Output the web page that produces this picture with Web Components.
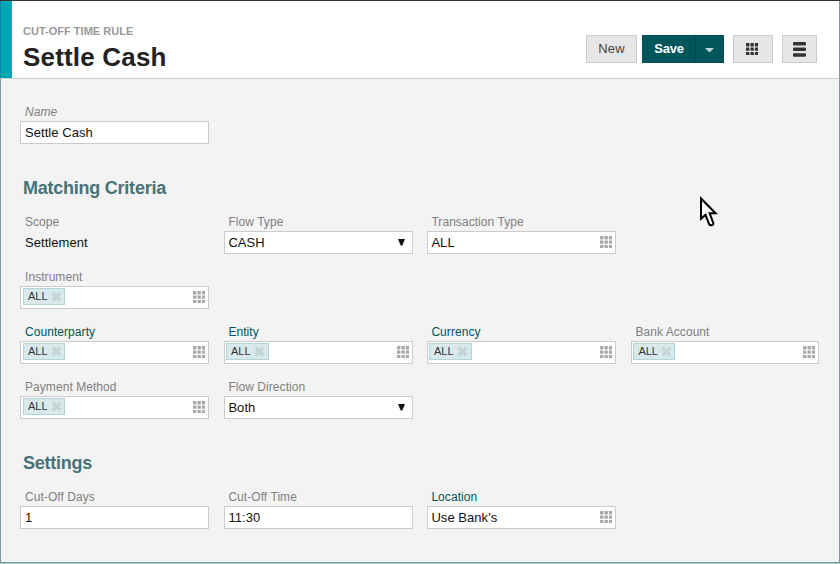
<!DOCTYPE html>
<html lang="en"><head><meta charset="utf-8"><title>Cut-Off Time Rule</title>
<style>html,body{margin:0;height:100%;overflow:hidden}body{font-family:"Liberation Sans",Arial,sans-serif;color:#222}</style></head>
<body>
<rule-page>
  <page-header slot="header" kicker="CUT-OFF TIME RULE" heading="Settle Cash">
    <tool-button style="width:51px;margin-right:5px">New</tool-button>
    <save-button>Save</save-button>
    <tool-button style="width:40px;margin:0 9px;padding-right:2px"><icon-grid dark></icon-grid></tool-button>
    <tool-button style="width:35px"><icon-list></icon-list></tool-button>
  </page-header>
  <field-row><form-field label="Name" italic>Settle Cash</form-field></field-row>
  <section-title style="margin-top:33px">Matching Criteria</section-title>
  <field-row style="margin-top:16px"><form-field label="Scope" kind="plain">Settlement</form-field><form-field label="Flow Type" kind="select">CASH</form-field><form-field label="Transaction Type" kind="lookup">ALL</form-field></field-row>
  <field-row style="margin-top:16px"><form-field label="Instrument" kind="lookup"><value-chip>ALL</value-chip></form-field></field-row>
  <field-row style="margin-top:16px"><form-field label="Counterparty" link kind="lookup"><value-chip>ALL</value-chip></form-field><form-field label="Entity" link kind="lookup"><value-chip wide>ALL</value-chip></form-field><form-field label="Currency" link kind="lookup"><value-chip wide>ALL</value-chip></form-field><form-field label="Bank Account" kind="lookup"><value-chip>ALL</value-chip></form-field></field-row>
  <field-row style="margin-top:16px"><form-field label="Payment Method" kind="lookup"><value-chip>ALL</value-chip></form-field><form-field label="Flow Direction" kind="select">Both</form-field></field-row>
  <section-title style="margin-top:33px">Settings</section-title>
  <field-row style="margin-top:16px"><form-field label="Cut-Off Days">1</form-field><form-field label="Cut-Off Time">11:30</form-field><form-field label="Location" link kind="lookup">Use Bank's</form-field></field-row>
</rule-page>
<mouse-pointer></mouse-pointer>
<script>
function define(name, render) {
  customElements.define(name, class extends HTMLElement {
    constructor() { super(); this.attachShadow({ mode: "open" }); }
    connectedCallback() { this.shadowRoot.innerHTML = render(this); }
  });
}
const at = (el, n) => el.getAttribute(n) || "";

define("rule-page", () => `<style>
  :host{display:flex;flex-direction:column;box-sizing:border-box;height:564px;border-top:1px solid #333;border-bottom:1px solid #a3cbcb}
  main{flex:1;box-sizing:border-box;background:#f3f3f3;border:solid #789da1;border-width:0 1px 1px;padding:26px 0 0 19px}
</style><slot name="header"></slot><main><slot></slot></main>`);

define("page-header", el => `<style>
  :host{display:flex;box-sizing:border-box;height:78px;background:#fff;border-bottom:1px solid #ccc;border-right:1px solid #789da1}
  .bar{width:12px;box-sizing:border-box;background:#00a5b8;border-left:1px solid #038c9c}
  .titles{flex:1;padding:24px 0 0 11px}
  .kicker{font:bold 11px/13px "Liberation Sans",Arial,sans-serif;color:#999;letter-spacing:.02px}
  h1{margin:4px 0 0;font-size:26px;line-height:30px;letter-spacing:.18px;color:#222}
  .actions{display:flex;padding:34px 22px 0 0;height:28px}
</style><div class="bar"></div><div class="titles"><div class="kicker">${at(el,"kicker")}</div><h1>${at(el,"heading")}</h1></div><div class="actions"><slot></slot></div>`);

define("tool-button", () => `<style>
  :host{display:flex;box-sizing:border-box;height:28px;align-items:center;justify-content:center;background:#e6e6e6;border:1px solid #ccc;font-size:13px;line-height:26px;letter-spacing:.2px;color:#444}
</style><slot></slot>`);

define("save-button", () => `<style>
  :host{display:flex;box-sizing:border-box;width:82px;height:28px;background:#00565b;border:1px solid #004f54;color:#fff;font-weight:bold;font-size:13px;line-height:26px;letter-spacing:-.2px}
  span{width:52px;text-align:center;border-right:1px solid #00484d}
  i{flex:1;display:flex;align-items:center;justify-content:center}
</style><span><slot></slot></span><i><svg width="9" height="4" style="margin:2px 1px 0 0"><path d="M0 0h9L5 4H4z" fill="#b9d3d4"/></svg></i>`);

define("icon-grid", el => {
  const dark = el.hasAttribute("dark");
  let r = "";
  for (let y = 0; y < 3; y++) for (let x = 0; x < 3; x++)
    r += `<rect x="${x*4.45}" y="${y*4.45}" width="3.4" height="3.4" rx=".4"/>`;
  return `<style>:host{display:block;height:13px}svg{display:block}</style>
  <svg width="12.4" height="12.4" viewBox="0 0 12.4 12.4" fill="${dark ? "#333" : "#a8a8a8"}">${r}</svg>`;
});

define("icon-list", () => `<style>:host{display:block;height:15px}svg{display:block}</style>
  <svg width="13" height="15" fill="#333"><rect width="13" height="3.5" rx="1"/><rect y="5.6" width="13" height="3.5" rx="1"/><rect y="11.2" width="13" height="3.5" rx="1"/></svg>`);

define("section-title", () => `<style>
  :host{display:block;height:22px;padding-left:3px;font-size:18px;line-height:22px;letter-spacing:-.24px;font-weight:bold;color:#477277}
</style><slot></slot>`);

define("field-row", () => `<style>
  :host{display:grid;grid-template-columns:204px 203px 204px 188px;height:39px}
</style><slot></slot>`);

define("form-field", el => {
  const kind = at(el, "kind");
  const end = kind === "select" ? `<svg class="arrow" width="7" height="7"><path d="M0 0h7L4.3 6.5H2.7z" fill="#111"/></svg>`
    : kind === "lookup" ? "<icon-grid></icon-grid>" : "";
  return `<style>
  :host{display:block;width:189px;--inset:5px}
  :host(:nth-child(n+2)){--inset:4.4px}
  :host(:nth-child(4)){width:188px}
  .label{height:14px;padding-left:var(--inset);font-size:12px;line-height:14px;letter-spacing:.06px;color:#808080;margin-bottom:2px;white-space:nowrap}
  :host([link]) .label{color:#00535a}
  :host([italic]) .label{font-style:italic}
  .box{display:flex;align-items:center;justify-content:space-between;box-sizing:border-box;height:23px;border:1px solid #ccc;background:#fff;padding:0 3px 0 calc(var(--inset) - 1px);font-size:13px;line-height:21px;letter-spacing:.05px;color:#111}
  .plain{background:none;border-color:transparent}
  .arrow{margin:0 4px 1px 0}
  </style><div class="label">${at(el,"label")}</div><div class="box ${kind}"><span><slot></slot></span>${end}</div>`;
});

define("value-chip", () => `<style>
  :host{display:flex;box-sizing:border-box;align-items:center;width:42px;height:17px;margin:0 0 2px -2px;padding-left:4px;background:#d9e8ea;border:1px solid #b2d5d8;font-size:11px;line-height:15px;letter-spacing:0;color:#333}
  :host([wide]){width:43px;margin-left:-2.4px}
  svg{margin-left:3px}
</style><slot></slot><svg width="11" height="11"><path d="M1.7 1.7l7.6 7.6M9.3 1.7l-7.6 7.6" stroke="#c3d5d5" stroke-width="3.4"/></svg>`);

define("mouse-pointer", () => `<style>:host{position:absolute;left:700px;top:196px;width:18px;height:31px}svg{display:block}</style>
  <svg width="18" height="31"><path d="M1 2.5V22.8L5.5 18.8l3.6 9.2q.8 1.6 2.6 1.3 2.1-.6 1.5-2.5L9.6 17.2H15.6z" fill="#fff" stroke="#000" stroke-width="2"/></svg>`);
</script>
</body></html>
